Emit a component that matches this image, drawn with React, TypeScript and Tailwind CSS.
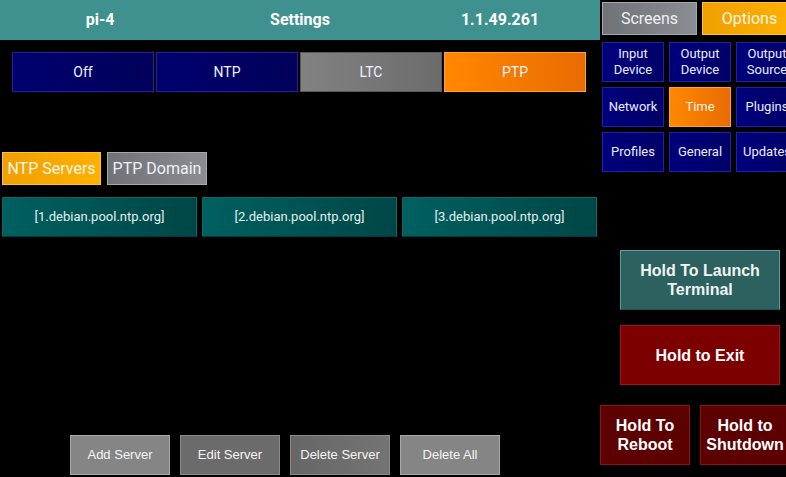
import React from 'react';

// ===== Data =====
const MODES = [
    { id: 'off', label: 'Off', cls: 'bg-linear-to-r from-[#00006e] to-[#00005a] border-[#2222a0]' },
    { id: 'ntp', label: 'NTP', cls: 'bg-linear-to-r from-[#00006e] to-[#00005a] border-[#2222a0]' },
    { id: 'ltc', label: 'LTC', cls: 'bg-linear-to-r from-[#828282] to-[#6c6c6c] border-[#5a5a5a]' },
    { id: 'ptp', label: 'PTP', cls: 'bg-linear-to-r from-[#ff8800] to-[#e86c00] border-[#ffa040]' },
];

const MENU = [
    ['Input', 'Device'],
    ['Output', 'Device'],
    ['Output', 'Source'],
    ['Network'],
    ['Time'],
    ['Plugins'],
    ['Profiles'],
    ['General'],
    ['Updates'],
];

const SERVERS = ['[1.debian.pool.ntp.org]', '[2.debian.pool.ntp.org]', '[3.debian.pool.ntp.org]'];

const ACTIONS = [
    { label: 'Add Server', cls: 'bg-[#858585] border-[#a8a8a8]' },
    { label: 'Edit Server', cls: 'bg-[#6b6b6b] border-[#8a8a8a]' },
    { label: 'Delete Server', cls: 'bg-linear-to-r from-[#666666] to-[#747474] border-[#8a8a8a]' },
    { label: 'Delete All', cls: 'bg-[#858585] border-[#a8a8a8]' },
];

const roboto = "font-['Roboto','Liberation_Sans',sans-serif]";
const arial = "font-['Liberation_Sans','Arial',sans-serif]";

export default function App() {
    return (
        <div className="w-[786px] h-[477px] bg-black flex overflow-hidden text-white">
            {/* Left: settings panel */}
            <div className="w-[600px] flex flex-col shrink-0">
                <div className={`h-10 bg-[#3e918e] grid grid-cols-3 items-center text-center font-bold text-[16px] ${roboto}`}>
                    <span>pi-4</span>
                    <span>Settings</span>
                    <span>1.1.49.261</span>
                </div>

                <div className={`mt-3 ml-3 flex gap-[2px] text-[14px] ${roboto}`}>
                    {MODES.map(m => (
                        <div
                            key={m.id}
                            className={`w-[142px] h-10 border flex items-center justify-center text-[#eef0ff] ${m.cls}`}
                        >
                            {m.label}
                        </div>
                    ))}
                </div>

                <div className={`mt-[60px] ml-[2px] flex gap-[6px] text-[16px] ${roboto}`}>
                    <div className="w-[99px] h-[33px] border border-[#ffc040] bg-linear-to-r from-[#f0a000] to-[#ffb000] flex items-center justify-center text-[#fff6e8]">
                        NTP Servers
                    </div>
                    <div className="w-[100px] h-[33px] border border-[#a8a8a8] bg-linear-to-r from-[#6f7377] to-[#8a8e92] flex items-center justify-center text-[#eef0f4]">
                        PTP Domain
                    </div>
                </div>

                <div className={`mt-3 ml-[2px] flex gap-[5px] text-[13px] ${roboto}`}>
                    {SERVERS.map(s => (
                        <div
                            key={s}
                            className="w-[195px] h-10 border border-[#0a6a68] border-b-[#003a3a] bg-linear-to-r from-[#006060] to-[#004646] flex items-center justify-center text-[#e0f0f0]"
                        >
                            {s}
                        </div>
                    ))}
                </div>

                <div className={`mt-auto mb-[2px] ml-[70px] flex gap-[10px] text-[13px] ${arial}`}>
                    {ACTIONS.map(a => (
                        <div
                            key={a.label}
                            className={`w-[100px] h-10 border flex items-center justify-center text-[#f4f4f4] ${a.cls}`}
                        >
                            {a.label}
                        </div>
                    ))}
                </div>
            </div>

            {/* Right: navigation and system controls */}
            <div className="w-[186px] shrink-0 flex flex-col">
                <div className={`mt-[2px] ml-[2px] flex gap-[5px] text-[16px] ${roboto}`}>
                    <div className="w-[95px] h-[33px] shrink-0 border border-[#a8a8a8] bg-linear-to-r from-[#6f7377] to-[#8a8e92] flex items-center justify-center pt-[1px] text-[#eef0f4]">
                        Screens
                    </div>
                    <div className="w-[95px] h-[33px] shrink-0 border border-[#ffc040] bg-linear-to-r from-[#f0a000] to-[#ffb000] flex items-center justify-center pt-[1px] text-[#fff6e8]">
                        Options
                    </div>
                </div>

                <div className={`mt-[7px] ml-[2px] grid grid-cols-[62px_62px_62px] gap-[5px] text-[13px] leading-[16px] ${roboto}`}>
                    {MENU.map(lines => {
                        const active = lines[0] === 'Time';
                        return (
                            <div
                                key={lines.join(' ')}
                                className={`h-10 border flex flex-col items-center justify-center text-center whitespace-nowrap ${
                                    active
                                        ? 'bg-linear-to-r from-[#ff8800] to-[#e86c00] border-[#ffa040] text-[#fff4e8]'
                                        : 'bg-linear-to-r from-[#00007c] to-[#000068] border-[#2020a8] text-[#e8ecff]'
                                }`}
                            >
                                {lines.map(l => <span key={l}>{l}</span>)}
                            </div>
                        );
                    })}
                </div>

                <div className={`font-bold text-[16px] leading-[19px] text-center ${arial}`}>
                    <div className="mt-[78px] ml-5 w-[160px] h-[60px] border border-[#5e9e9a] border-b-[#234f4d] bg-[#2c615f] flex items-center justify-center text-[#f0f4f4]">
                        Hold To Launch<br />Terminal
                    </div>
                    <div className="mt-[15px] ml-5 w-[160px] h-[60px] border border-[#a01818] bg-[#7c0000] flex items-center justify-center">
                        Hold to Exit
                    </div>
                    <div className="mt-[20px] flex gap-[10px]">
                        <div className="w-[90px] h-[60px] shrink-0 border border-[#8c1414] bg-[#5c0000] flex items-center justify-center">
                            Hold To<br />Reboot
                        </div>
                        <div className="w-[90px] h-[60px] shrink-0 border border-[#8c1414] bg-[#5c0000] flex items-center justify-center">
                            Hold to<br />Shutdown
                        </div>
                    </div>
                </div>
            </div>
        </div>
    );
}
